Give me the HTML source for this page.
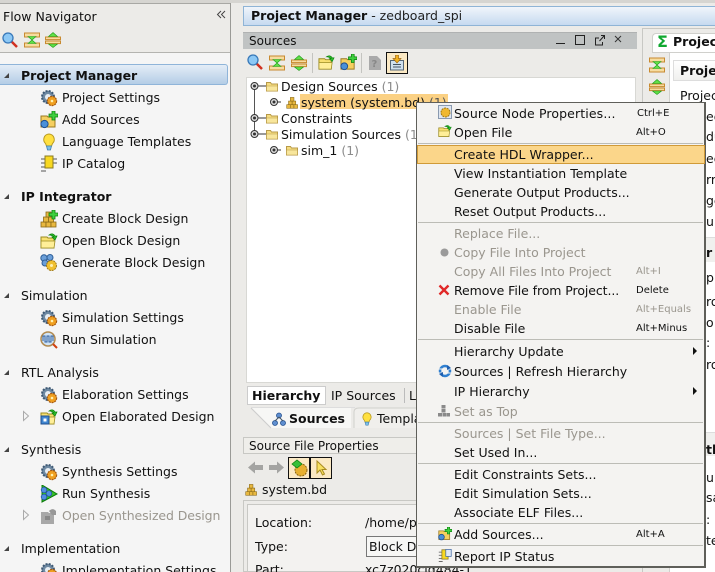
<!DOCTYPE html>
<html><head><meta charset="utf-8">
<style>
html{margin:0;padding:0;width:715px;height:572px;overflow:hidden}
body{margin:0;padding:0;width:715px;height:572px;overflow:hidden;position:relative;background:#ecebe8;font-family:"DejaVu Sans",sans-serif;font-size:12.5px;color:#111}
.t{position:absolute;line-height:16px;height:16px;white-space:nowrap}
.u .t{margin-top:1px}
.f{width:9px;overflow:hidden}
.b{font-weight:bold}
.d{color:#9a968e}
.n{color:#8c8c8c}
.s{font-size:10px}
.r{position:absolute}
svg.i{position:absolute;width:18px;height:18px}
svg.a{position:absolute}
</style></head><body>
<svg width="0" height="0" style="position:absolute"><defs>
<symbol id="gear" viewBox="0 0 18 18"><circle cx="8" cy="8" r="6" fill="#6f8aa3" stroke="#3f5a75" stroke-width="2" stroke-dasharray="2 1.2"/><circle cx="8" cy="8" r="3" fill="#e8eef3"/><circle cx="12" cy="12" r="4.6" fill="#f0a020" stroke="#a85a10" stroke-width="1.2" stroke-dasharray="2 .8"/><circle cx="12" cy="12" r="1.3" fill="#fff0b0"/></symbol>
<symbol id="add" viewBox="0 0 18 18"><path d="M1 5h6l1 1h7v10H1z" fill="#f5cf60" stroke="#9a7a20"/><circle cx="4.5" cy="13" r="3.6" fill="#4a90d8" stroke="#1f4f8f"/><path d="M12 0h3v3h3v3h-3v3h-3V6H9V3h3z" fill="#3fd03f" stroke="#0c800c" stroke-width=".8"/></symbol>
<symbol id="bulb" viewBox="0 0 18 18"><path d="M9 1a5.500 5.500 0 0 1 3.500 9.500L11.500 13h-5L5.500 10.500A5.500 5.500 0 0 1 9 1z" fill="#ffe040" stroke="#b89a20"/><path d="M6.500 13h5l-1 4h-3z" fill="#7cc0ea" stroke="#4080b0" stroke-width=".8"/></symbol>
<symbol id="ip" viewBox="0 0 18 18"><path d="M1 4h5M1 8h5M1 12h5M1 16h5M12 4h5M12 8h5" stroke="#555" fill="none"/><rect x="5" y="1" width="8" height="12" fill="#f8d820" stroke="#8a7a20"/></symbol>
<symbol id="blocks" viewBox="0 0 18 18"><g fill="#e8b840" stroke="#8a6a18" stroke-width=".8"><rect x="1" y="12" width="5" height="5"/><rect x="6" y="12" width="5" height="5"/><rect x="11" y="12" width="5" height="5"/><rect x="3.500" y="7" width="5" height="5"/><rect x="8.500" y="7" width="5" height="5"/><rect x="6" y="2" width="5" height="5"/></g></symbol>
<symbol id="cblock" viewBox="0 0 18 18"><use href="#blocks"/><path d="M12 0h3v3h3v3h-3v3h-3V6H9V3h3z" fill="#3fd03f" stroke="#0c800c" stroke-width=".8"/></symbol>
<symbol id="open" viewBox="0 0 18 18"><path d="M1 5h6l1 1h6v10H1z" fill="#f8e070" stroke="#9a8a20"/><path d="M1 9h14l-1 7H1z" fill="#ffef98" stroke="#9a8a20" stroke-width=".8"/><path d="M9 3c3-2 5-1 6 1l2 0-2 4-3-3 2 0c-1-1-3-2-5-2z" fill="#30c030" stroke="#0a800a" stroke-width=".7"/></symbol>
<symbol id="gen" viewBox="0 0 18 18"><circle cx="4" cy="4" r="3.200" fill="#6a9ed8" stroke="#2f5f98"/><circle cx="10" cy="3.500" r="3" fill="#6a9ed8" stroke="#2f5f98"/><circle cx="5" cy="9" r="3" fill="#6a9ed8" stroke="#2f5f98"/><circle cx="11.500" cy="11.500" r="5" fill="#f0c030" stroke="#a07810" stroke-dasharray="2 .8"/><circle cx="11.500" cy="11.500" r="1.500" fill="#fff0b0"/></symbol>
<symbol id="sim" viewBox="0 0 18 18"><circle cx="8" cy="8" r="7" fill="#cfe3f5" stroke="#b08a50" stroke-width="1.500"/><path d="M3 10V5h2v6h2V5h2v6h2V5h2v5" fill="none" stroke="#2f5f9f"/><path d="M13 13l4 4" stroke="#d04010" stroke-width="2"/></symbol>
<symbol id="elab" viewBox="0 0 18 18"><use href="#open"/><rect x="1" y="8" width="8" height="8" fill="#3f86d0" stroke="#1f4f8f"/><rect x="3.500" y="10.500" width="3" height="3" fill="#fff"/></symbol>
<symbol id="run" viewBox="0 0 18 18"><path d="M2 0l15 9L2 17z" fill="#38c028" stroke="#0a7a0a"/><g fill="#4f8fe0" stroke="#1f4f98" stroke-width=".7"><circle cx="4" cy="5" r="2.800"/><circle cx="4" cy="12" r="2.800"/><circle cx="9" cy="8.500" r="2.800"/></g></symbol>
<symbol id="grayd" viewBox="0 0 18 18"><path d="M1 5h7l1 1h5v11H1z" fill="#a8a8a8"/><path d="M9 4c3-3 5-2 7 0v4h-4z" fill="#989898"/><rect x="5" y="9" width="5" height="4" fill="#888"/></symbol>
<symbol id="folder" viewBox="0 0 12 11"><path d="M.500 1.500h4l1 1.500h6v7h-11z" fill="#f5dc80" stroke="#b89a48"/><path d="M.500 5h11v5h-11z" fill="#f8e69c" stroke="#b89a48" stroke-width=".6"/></symbol>
<symbol id="ex" viewBox="0 0 16 16"><rect x=".5" y="1" width="15" height="4" fill="#f6dca0" stroke="#c88a30"/><rect x=".5" y="11" width="15" height="4" fill="#f6dca0" stroke="#c88a30"/><path d="M4 4.500h8L8 8z M4 11.500h8L8 8z" fill="#60e048" stroke="#1f9a18" stroke-width=".6"/></symbol>
<symbol id="co" viewBox="0 0 16 16"><rect x=".5" y="5" width="15" height="2.600" fill="#f6dca0" stroke="#c88a30"/><rect x=".5" y="9" width="15" height="2.600" fill="#f6dca0" stroke="#c88a30"/><path d="M8 .5l4.500 4h-9z M8 15.500l4.500-3.500h-9z" fill="#60e048" stroke="#1f9a18" stroke-width=".6"/></symbol>
<symbol id="mag" viewBox="0 0 16 16"><path d="M9 9l6 6" stroke="#d03020" stroke-width="2.500"/><circle cx="6" cy="6" r="5" fill="#8cc8f5" stroke="#3878b8" stroke-width="1.300"/></symbol>
<symbol id="handle" viewBox="0 0 9 9"><circle cx="4.500" cy="4.500" r="3.500" fill="#ddd" stroke="#333"/><circle cx="4.500" cy="4.500" r="1.500" fill="#333"/></symbol>
</defs></svg>

<!-- top rule -->
<div class="r" style="left:0;top:0;width:715px;height:3px;background:#d6d5d1"></div>
<div class="r" style="left:0;top:3px;width:231px;height:1px;background:#a8a8a4"></div>

<!-- left nav -->
<div class="r" style="left:0;top:52px;width:230px;height:520px;background:#f5f5f5;border-top:1px solid #b4b4b0;box-sizing:border-box"></div>
<div class="r" style="left:230px;top:3px;width:1px;height:569px;background:#9a9a96"></div>
<svg class="a" style="left:216px;top:10px" width="10" height="10"><path d="M5 1L1.500 4.500 5 8M9 1L5.500 4.500 9 8" fill="none" stroke="#444"/></svg>
<svg class="a" style="left:2px;top:32px" width="16" height="16"><use href="#mag"/></svg>
<svg class="a" style="left:24px;top:32px" width="16" height="16"><use href="#ex"/></svg>
<svg class="a" style="left:45px;top:32px" width="16" height="16"><use href="#co"/></svg>

<div class="r" style="left:0;top:64px;width:228px;height:21px;border:1px solid #8fb4d9;border-left:0;border-radius:0 3px 3px 0;box-sizing:border-box;background:linear-gradient(#e4edf7,#b4cde6)"></div>

<svg class="a" style="left:0;top:0" width="20" height="572"><g fill="#444"><path d="M4 78l5-5v5z"/><path d="M4 199l5-5v5z"/><path d="M4 298l5-5v5z"/><path d="M4 375l5-5v5z"/><path d="M4 452l5-5v5z"/><path d="M4 551l5-5v5z"/></g></svg>
<svg class="a" style="left:22px;top:410px" width="8" height="112"><path d="M1.500 1.500l5 4.500-5 4.500zM1.500 100.500l5 4.500-5 4.500z" fill="#f5f5f5" stroke="#aaa"/></svg>

<div class="u">
<div class="t" style="left:3px;top:8px">Flow Navigator</div>
<div class="t b" style="left:21px;top:67px">Project Manager</div>
<svg class="i" style="left:40px;top:89px"><use href="#gear"/></svg><div class="t" style="left:62px;top:89px">Project Settings</div>
<svg class="i" style="left:40px;top:111px"><use href="#add"/></svg><div class="t" style="left:62px;top:111px">Add Sources</div>
<svg class="i" style="left:40px;top:133px"><use href="#bulb"/></svg><div class="t" style="left:62px;top:133px">Language Templates</div>
<svg class="i" style="left:40px;top:155px"><use href="#ip"/></svg><div class="t" style="left:62px;top:155px">IP Catalog</div>

<div class="t b" style="left:21px;top:188px">IP Integrator</div>
<svg class="i" style="left:40px;top:210px"><use href="#cblock"/></svg><div class="t" style="left:62px;top:210px">Create Block Design</div>
<svg class="i" style="left:40px;top:232px"><use href="#open"/></svg><div class="t" style="left:62px;top:232px">Open Block Design</div>
<svg class="i" style="left:40px;top:254px"><use href="#gen"/></svg><div class="t" style="left:62px;top:254px">Generate Block Design</div>

<div class="t" style="left:21px;top:287px">Simulation</div>
<svg class="i" style="left:40px;top:309px"><use href="#gear"/></svg><div class="t" style="left:62px;top:309px">Simulation Settings</div>
<svg class="i" style="left:40px;top:331px"><use href="#sim"/></svg><div class="t" style="left:62px;top:331px">Run Simulation</div>

<div class="t" style="left:21px;top:364px">RTL Analysis</div>
<svg class="i" style="left:40px;top:386px"><use href="#gear"/></svg><div class="t" style="left:62px;top:386px">Elaboration Settings</div>
<svg class="i" style="left:40px;top:408px"><use href="#elab"/></svg><div class="t" style="left:62px;top:408px">Open Elaborated Design</div>

<div class="t" style="left:21px;top:441px">Synthesis</div>
<svg class="i" style="left:40px;top:463px"><use href="#gear"/></svg><div class="t" style="left:62px;top:463px">Synthesis Settings</div>
<svg class="i" style="left:40px;top:485px"><use href="#run"/></svg><div class="t" style="left:62px;top:485px">Run Synthesis</div>
<svg class="i" style="left:40px;top:507px"><use href="#grayd"/></svg><div class="t d" style="left:62px;top:507px;letter-spacing:-.09px">Open Synthesized Design</div>

<div class="t" style="left:21px;top:540px">Implementation</div>
<div class="r" style="left:40px;top:562px;width:18px;height:10px;overflow:hidden"><svg class="i" style="left:0;top:0"><use href="#gear"/></svg></div>
<div class="t" style="left:62px;top:562px;height:9px;overflow:hidden">Implementation Settings</div>
</div>

<!-- project manager bar -->
<div class="r" style="left:243px;top:6px;width:472px;height:20px;box-sizing:border-box;border:1px solid #8fb4d6;border-right:0;background:linear-gradient(#f0f5fb,#c6daf0)"></div>
<div class="t" style="left:251px;top:8px"><span class="b">Project Manager</span> <span style="color:#222;font-size:12.5px">- zedboard_spi</span></div>

<!-- sources panel -->
<div class="r" style="left:243px;top:32px;width:394px;height:17px;background:#c0c3c3;border-top:1px solid #b0b2b2;box-sizing:border-box"></div>
<div class="t" style="left:249px;top:33px;font-size:12px">Sources</div>
<svg class="a" style="left:555px;top:32px" width="80" height="16"><path d="M1 11.500h9" stroke="#222" stroke-width="1"/><rect x="20.500" y="3.500" width="9" height="9" fill="none" stroke="#222"/><path d="M44 6h-3.500v7h7V10M44.500 9L49 4M46 3.500h3.500V7" fill="none" stroke="#222"/><path d="M60 4l6 6M66 4l-6 6" stroke="#333" fill="none"/></svg>
<svg class="a" style="left:247px;top:54px" width="16" height="16"><use href="#mag"/></svg>
<svg class="a" style="left:269px;top:55px" width="16" height="16"><use href="#ex"/></svg>
<svg class="a" style="left:291px;top:55px" width="16" height="16"><use href="#co"/></svg>
<div class="r" style="left:312px;top:53px;width:1px;height:20px;background:#c4c4c0"></div>
<svg class="a" style="left:318px;top:54px" width="17" height="17"><use href="#open"/></svg>
<svg class="a" style="left:340px;top:54px" width="17" height="17"><use href="#add"/></svg>
<div class="r" style="left:361px;top:53px;width:1px;height:20px;background:#c4c4c0"></div>
<svg class="a" style="left:368px;top:55px" width="14" height="16"><path d="M1 1h8l4 4v10H1z" fill="#aaa"/><text x="3.500" y="12" font-family="DejaVu Sans" font-size="10" font-weight="bold" fill="#888">?</text></svg>
<div class="r" style="left:386px;top:52px;width:22px;height:22px;box-sizing:border-box;border:1px solid #111;background:#fbe9c4"></div>
<svg class="a" style="left:389px;top:55px" width="16" height="16"><rect x="1.500" y="5.500" width="13" height="9.500" fill="#cfe0ef" stroke="#567"/><path d="M4 9.500h8M4 12h8" stroke="#456"/><path d="M6.500 0h3v3.500H12L8 8 4 3.500h2.500z" fill="#f0b020" stroke="#a06810" stroke-width=".7"/></svg>

<div class="r" style="left:246px;top:77px;width:390px;height:306px;background:#fff;border:1px solid #d8d8d4;box-sizing:border-box"></div>
<svg class="a" style="left:246px;top:77px" width="60" height="85"><path d="M8.500 9v48" stroke="#555" fill="none"/><path d="M8 9h12M27 25h8M8 41h12M8 57h12M27 73h8" stroke="#333" fill="none"/><use href="#handle" x="4" y="4.500" width="9" height="9"/><use href="#handle" x="23.500" y="20.500" width="9" height="9"/><use href="#handle" x="4" y="36.500" width="9" height="9"/><use href="#handle" x="4" y="52.500" width="9" height="9"/><use href="#handle" x="23.500" y="68.500" width="9" height="9"/></svg>
<svg class="a" style="left:266px;top:81px" width="12" height="11"><use href="#folder"/></svg>
<svg class="a" style="left:266px;top:113px" width="12" height="11"><use href="#folder"/></svg>
<svg class="a" style="left:266px;top:129px" width="12" height="11"><use href="#folder"/></svg>
<svg class="a" style="left:286px;top:145px" width="12" height="11"><use href="#folder"/></svg>
<svg class="a" style="left:286px;top:96px" width="13" height="13" viewBox="0 0 18 18"><use href="#blocks"/></svg>
<div class="r" style="left:300px;top:94px;width:148px;height:15px;background:#fbd184"></div>
<div class="u">
<div class="t" style="left:281px;top:78px">Design Sources <span class="n">(1)</span></div>
<div class="t" style="left:301px;top:94px">system (system.bd) <span style="color:#555">(1)</span></div>
<div class="t" style="left:281px;top:110px">Constraints</div>
<div class="t" style="left:281px;top:126px">Simulation Sources <span class="n">(1)</span></div>
<div class="t" style="left:301px;top:142px">sim_1 <span class="n">(1)</span></div>
</div>

<!-- tabs -->
<div class="r" style="left:247px;top:386px;width:79px;height:19px;background:#fff;border:1px solid #ccc;box-sizing:border-box"></div>
<div class="t b" style="left:252px;top:388px">Hierarchy</div>
<div class="t" style="left:331px;top:388px">IP Sources</div>
<div class="r" style="left:404px;top:388px;width:1px;height:15px;background:#bbb"></div>
<div class="t" style="left:409px;top:388px">Libraries</div>
<svg class="a" style="left:243px;top:407px" width="180" height="22"><path d="M8 0H108V21H28z" fill="#f7f7f5"/><path d="M8 1L28 21" stroke="#ccc" fill="none"/><path d="M8 .500H112" stroke="#ddd"/><path d="M111 21V5c0-3 2-4 5-4h60V21" fill="#f0efec" stroke="#d0d0cc"/></svg>
<svg class="a" style="left:272px;top:412px" width="14" height="14" viewBox="0 0 14 14"><g fill="#5f8fd0" stroke="#24508f" stroke-width=".8"><circle cx="7" cy="3.500" r="2.500"/><circle cx="3" cy="11" r="2.500"/><circle cx="11" cy="11" r="2.500"/></g><path d="M7 5L3 9M7 5l4 4" stroke="#456"/></svg>
<div class="t b" style="left:289px;top:411px">Sources</div>
<svg class="a" style="left:360px;top:411px" width="14" height="16" viewBox="0 0 18 18"><use href="#bulb"/></svg>
<div class="t" style="left:377px;top:411px">Templates</div>

<!-- source file properties -->
<div class="r" style="left:243px;top:437px;width:180px;height:17px;background:#efeeea;border:1px solid #c8c8c4;box-sizing:border-box"></div>
<div class="t" style="left:249px;top:438px;font-size:12px">Source File Properties</div>
<svg class="a" style="left:247px;top:460px" width="40" height="15"><path d="M1 7.500L8 1.500V5h8v5H8v3.500z" fill="#a4a4a2"/><path d="M37 7.500L30 1.500V5h-8v5h8v3.500z" fill="#a4a4a2"/></svg>
<div class="r" style="left:288px;top:457px;width:22px;height:22px;box-sizing:border-box;border:1px solid #111;background:#fbe9c4"></div>
<svg class="a" style="left:291px;top:459px" width="17" height="18"><circle cx="10" cy="11" r="6" fill="#e8b030" stroke="#8a6410" stroke-dasharray="2 1"/><path d="M1 5l5-4 5 4-5 4z" fill="#38c038" stroke="#0f800f" stroke-width=".8"/></svg>
<div class="r" style="left:310px;top:457px;width:22px;height:22px;box-sizing:border-box;border:1px solid #111;background:#fbe9c4"></div>
<svg class="a" style="left:314px;top:460px" width="14" height="16"><path d="M3 1v12l3-3 2.500 5 2-1-2.500-4.500h4z" fill="#f8e060" stroke="#a88a20"/></svg>
<svg class="a" style="left:245px;top:483px" width="13" height="13" viewBox="0 0 18 18"><use href="#blocks"/></svg>
<div class="t" style="left:262px;top:482px">system.bd</div>
<div class="r" style="left:243px;top:500px;width:190px;height:72px;border:1px solid #c8c8c4;box-sizing:border-box;background:#ecebe8"></div>
<div class="r" style="left:247px;top:504px;width:186px;height:68px;border:1px solid #c8c8c4;box-sizing:border-box;background:#f3f2f0"></div>
<div class="t" style="left:255px;top:515px">Location:</div>
<div class="t" style="left:365px;top:515px">/home/peter</div>
<div class="t" style="left:255px;top:539px">Type:</div>
<div class="r" style="left:366px;top:536px;width:70px;height:21px;border:1px solid #777;box-sizing:border-box;background:#f7f7f5"></div>
<div class="t" style="left:369px;top:539px">Block Design</div>
<div class="t" style="left:255px;top:562px;height:10px;overflow:hidden">Part:</div>
<div class="t" style="left:365px;top:562px;height:10px;overflow:hidden">xc7z020clg484-1</div>

<!-- right panel -->
<div class="r" style="left:642px;top:28px;width:73px;height:544px;background:#ecebe8;border-left:1px solid #c8c8c4;border-top:1px solid #c8c8c4;box-sizing:border-box"></div>
<div class="r" style="left:652px;top:33px;width:63px;height:20px;background:#fff;border:1px solid #d0d0cc;border-right:0;border-radius:4px 0 0 0;box-sizing:border-box"></div>
<div class="t b" style="left:657px;top:34px;color:#10a830;font-size:16px">Σ</div>
<div class="t b" style="left:673px;top:34px;width:42px;overflow:hidden">Project Summary</div>
<div class="r" style="left:669px;top:53px;width:46px;height:519px;background:#fff;border-left:1px solid #d0d0cc;box-sizing:border-box"></div>
<svg class="a" style="left:649px;top:57px" width="16" height="16"><use href="#ex"/></svg>
<svg class="a" style="left:649px;top:79px" width="16" height="16"><use href="#co"/></svg>
<div class="r" style="left:673px;top:60px;width:42px;height:21px;background:linear-gradient(#fff,#f0f0ee);border:1px solid #ddd;border-right:0;box-sizing:border-box"></div>
<div class="t b" style="left:680px;top:63px;width:35px;overflow:hidden">Project Settings</div>
<div class="t" style="left:680px;top:88px;width:35px;overflow:hidden">Project name:</div>
<div class="r" style="left:673px;top:237px;width:42px;height:25px;background:#f0f0ee;border-top:1px solid #ddd;box-sizing:border-box"></div>
<div class="r" style="left:673px;top:432px;width:42px;height:24px;background:#f0f0ee;border-top:1px solid #ddd;box-sizing:border-box"></div>
<div class="t f" style="left:706px;top:109px">ed</div>
<div class="t f" style="left:706px;top:129px">du</div>
<div class="t f" style="left:706px;top:151px">ed</div>
<div class="t f" style="left:706px;top:172px">rm</div>
<div class="t f" style="left:706px;top:193px">ge</div>
<div class="t f" style="left:706px;top:214px">ula</div>
<div class="t f b" style="left:706px;top:245px">r</div>
<div class="t f" style="left:706px;top:270px">pla</div>
<div class="t f" style="left:706px;top:294px">ro</div>
<div class="t f" style="left:706px;top:315px">o</div>
<div class="t f" style="left:706px;top:335px">:</div>
<div class="t f" style="left:706px;top:357px">ro</div>
<div class="t f b" style="left:706px;top:442px">th</div>
<div class="t f" style="left:706px;top:470px">u</div>
<div class="t f" style="left:706px;top:490px">sa</div>
<div class="t f" style="left:706px;top:512px">:</div>
<div class="t f" style="left:706px;top:533px">te</div>

<!-- context menu -->
<div class="r" style="left:416px;top:102px;width:290px;height:466px;background:#f4f3f1;border:1px solid #5f5f5a;border-right:2px solid #5f5f5a;border-bottom:2px solid #5f5f5a;box-sizing:border-box"></div>
<div class="r" style="left:417px;top:145px;width:288px;height:19px;box-sizing:border-box;background:#fbd68a;border:1px solid #d09a38"></div>
<div class="r" style="left:418px;top:143px;width:285px;height:1px;background:#bcbcb6"></div>
<div class="r" style="left:418px;top:222px;width:285px;height:1px;background:#bcbcb6"></div>
<div class="r" style="left:418px;top:339px;width:285px;height:1px;background:#bcbcb6"></div>
<div class="r" style="left:418px;top:422px;width:285px;height:1px;background:#bcbcb6"></div>
<div class="r" style="left:418px;top:463px;width:285px;height:1px;background:#bcbcb6"></div>
<div class="r" style="left:418px;top:523px;width:285px;height:1px;background:#bcbcb6"></div>
<div class="r" style="left:418px;top:545px;width:285px;height:1px;background:#bcbcb6"></div>

<div class="u">
<div class="t" style="left:454px;top:105px;letter-spacing:.12px">Source Node Properties...</div>
<div class="t" style="left:454px;top:124px">Open File</div>
<div class="t" style="left:454px;top:146px">Create HDL Wrapper...</div>
<div class="t" style="left:454px;top:165px">View Instantiation Template</div>
<div class="t" style="left:454px;top:184px">Generate Output Products...</div>
<div class="t" style="left:454px;top:203px">Reset Output Products...</div>
<div class="t d" style="left:454px;top:225px">Replace File...</div>
<div class="t d" style="left:454px;top:244px">Copy File Into Project</div>
<div class="t d" style="left:454px;top:263px">Copy All Files Into Project</div>
<div class="t" style="left:454px;top:282px;letter-spacing:-.08px">Remove File from Project...</div>
<div class="t d" style="left:454px;top:301px">Enable File</div>
<div class="t" style="left:454px;top:320px">Disable File</div>
<div class="t" style="left:454px;top:343px">Hierarchy Update</div>
<div class="t" style="left:454px;top:363px">Sources | Refresh Hierarchy</div>
<div class="t" style="left:454px;top:383px">IP Hierarchy</div>
<div class="t d" style="left:454px;top:403px">Set as Top</div>
<div class="t d" style="left:454px;top:425px">Sources | Set File Type...</div>
<div class="t" style="left:454px;top:444px">Set Used In...</div>
<div class="t" style="left:454px;top:466px">Edit Constraints Sets...</div>
<div class="t" style="left:454px;top:485px">Edit Simulation Sets...</div>
<div class="t" style="left:454px;top:504px">Associate ELF Files...</div>
<div class="t" style="left:454px;top:526px">Add Sources...</div>
<div class="t" style="left:454px;top:548px">Report IP Status</div>

<div class="t s" style="left:637px;top:105px">Ctrl+E</div>
<div class="t s" style="left:636px;top:124px">Alt+O</div>
<div class="t s d" style="left:636px;top:263px">Alt+I</div>
<div class="t s" style="left:636px;top:282px">Delete</div>
<div class="t s d" style="left:636px;top:301px">Alt+Equals</div>
<div class="t s" style="left:636px;top:320px">Alt+Minus</div>
<div class="t s" style="left:636px;top:526px">Alt+A</div>
</div>

<svg class="a" style="left:692px;top:347px" width="6" height="50"><path d="M1 0l4 4-4 4zM1 40l4 4-4 4z" fill="#111"/></svg>

<svg class="a" style="left:438px;top:105px" width="14" height="14"><rect x=".5" y=".5" width="13" height="13" fill="#dfe6f0" stroke="#8a9ab0"/><circle cx="7.500" cy="7.500" r="4.500" fill="#f0b830" stroke="#a07810" stroke-dasharray="2 .8"/></svg>
<svg class="a" style="left:438px;top:124px" width="14" height="14" viewBox="0 0 18 18"><use href="#open"/></svg>
<svg class="a" style="left:440px;top:248px" width="9" height="9"><circle cx="4.500" cy="4.500" r="4" fill="#9a9a9a"/></svg>
<svg class="a" style="left:438px;top:284px" width="12" height="12"><path d="M1.500 1.500l9 9M10.500 1.500l-9 9" stroke="#e02828" stroke-width="2.400"/></svg>
<svg class="a" style="left:438px;top:364px" width="14" height="14"><circle cx="7" cy="7" r="5" fill="none" stroke="#2f7fd0" stroke-width="2.500"/><path d="M1 9h12M1 5h12" stroke="#f4f3f1" stroke-width="1"/><path d="M9 1l4 3-4 2zM5 13L1 10l4-2z" fill="#1f5fb0"/></svg>
<svg class="a" style="left:438px;top:405px" width="12" height="12"><g fill="#8a8a8a"><rect x="3.500" y="0" width="4" height="3.500"/><rect x="3.500" y="4" width="4" height="3.500"/><rect x="0" y="8" width="4" height="3.500"/><rect x="4.500" y="8" width="4" height="3.500"/><rect x="8.800" y="8" width="3.200" height="3.500"/></g></svg>
<svg class="a" style="left:438px;top:527px" width="14" height="14" viewBox="0 0 18 18"><use href="#add"/></svg>
<svg class="a" style="left:438px;top:549px" width="14" height="14" viewBox="0 0 18 18"><use href="#ip"/><rect x="10" y="0.500" width="7" height="9" fill="#dfe8f5" stroke="#4a70a8"/></svg>

</body></html>
